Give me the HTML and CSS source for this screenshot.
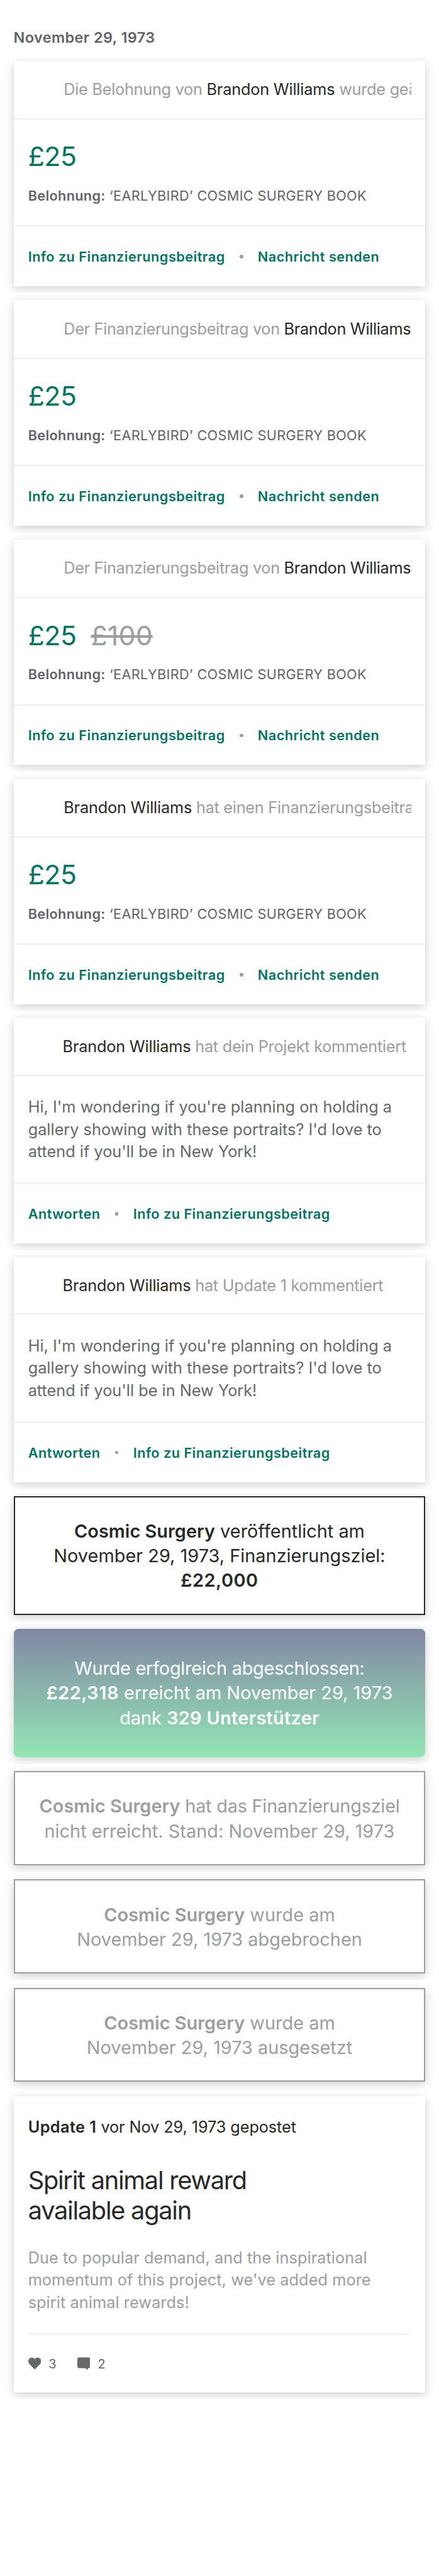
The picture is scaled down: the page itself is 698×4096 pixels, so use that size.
FILE: index.html
```html
<!DOCTYPE html>
<html lang="de">
<head>
<meta charset="utf-8">
<meta name="viewport" content="width=device-width, initial-scale=1">
<title>Projektaktivität</title>
<link rel="stylesheet" href="styles.css">
</head>
<body>
<main class="feed">
  <h1 class="date">November 29, 1973</h1>

  <section class="cell">
    <article class="card">
      <header class="head"><p class="head-text">Die Belohnung von <b>Brandon Williams</b> wurde geä</p></header>
      <div class="pledge">
        <p class="amount">£25</p>
        <p class="reward"><b>Belohnung:</b> ‘EARLYBIRD’ COSMIC SURGERY BOOK</p>
      </div>
      <footer class="actions"><a>Info zu Finanzierungsbeitrag</a><i class="dot"></i><a>Nachricht senden</a></footer>
    </article>
  </section>

  <section class="cell">
    <article class="card">
      <header class="head"><p class="head-text head-text-tight">Der Finanzierungsbeitrag von <b>Brandon Williams</b></p></header>
      <div class="pledge">
        <p class="amount">£25</p>
        <p class="reward"><b>Belohnung:</b> ‘EARLYBIRD’ COSMIC SURGERY BOOK</p>
      </div>
      <footer class="actions"><a>Info zu Finanzierungsbeitrag</a><i class="dot"></i><a>Nachricht senden</a></footer>
    </article>
  </section>

  <section class="cell">
    <article class="card">
      <header class="head"><p class="head-text head-text-tight">Der Finanzierungsbeitrag von <b>Brandon Williams</b></p></header>
      <div class="pledge">
        <p class="amount">£25<span class="old-amount">£100</span></p>
        <p class="reward"><b>Belohnung:</b> ‘EARLYBIRD’ COSMIC SURGERY BOOK</p>
      </div>
      <footer class="actions"><a>Info zu Finanzierungsbeitrag</a><i class="dot"></i><a>Nachricht senden</a></footer>
    </article>
  </section>

  <section class="cell">
    <article class="card">
      <header class="head"><p class="head-text"><b>Brandon Williams</b> hat einen Finanzierungsbeitra</p></header>
      <div class="pledge">
        <p class="amount">£25</p>
        <p class="reward"><b>Belohnung:</b> ‘EARLYBIRD’ COSMIC SURGERY BOOK</p>
      </div>
      <footer class="actions"><a>Info zu Finanzierungsbeitrag</a><i class="dot"></i><a>Nachricht senden</a></footer>
    </article>
  </section>

  <section class="cell">
    <article class="card card-comment">
      <header class="head"><p class="head-text"><b>Brandon Williams</b> hat dein Projekt kommentiert</p></header>
      <p class="comment">Hi, I'm wondering if you're planning on holding a<br>gallery showing with these portraits? I'd love to<br>attend if you'll be in New York!</p>
      <footer class="actions"><a>Antworten</a><i class="dot"></i><a>Info zu Finanzierungsbeitrag</a></footer>
    </article>
  </section>

  <section class="cell">
    <article class="card card-comment">
      <header class="head"><p class="head-text"><b>Brandon Williams</b> hat Update 1 kommentiert</p></header>
      <p class="comment">Hi, I'm wondering if you're planning on holding a<br>gallery showing with these portraits? I'd love to<br>attend if you'll be in New York!</p>
      <footer class="actions"><a>Antworten</a><i class="dot"></i><a>Info zu Finanzierungsbeitrag</a></footer>
    </article>
  </section>

  <section class="cell">
    <article class="card notice notice-launch"><b>Cosmic Surgery</b> veröffentlicht am<br>November 29, 1973, Finanzierungsziel:<br><b class="money">£22,000</b></article>
  </section>

  <section class="cell">
    <article class="card notice notice-success"><span class="tight">Wurde erfoglreich abgeschlossen:</span><br><b class="money">£22,318</b> erreicht am November 29, 1973<br>dank <b class="backers">329 Unterstützer</b></article>
  </section>

  <section class="cell">
    <article class="card notice notice-muted"><b>Cosmic Surgery</b><span class="tight"> hat das Finanzierungsziel</span><br>nicht erreicht. Stand: November 29, 1973</article>
  </section>

  <section class="cell">
    <article class="card notice notice-muted"><b>Cosmic Surgery</b> wurde am<br>November 29, 1973 abgebrochen</article>
  </section>

  <section class="cell">
    <article class="card notice notice-muted"><b>Cosmic Surgery</b> wurde am<br>November 29, 1973 ausgesetzt</article>
  </section>

  <section class="cell">
    <article class="card update">
      <p class="posted"><b>Update 1</b> vor Nov 29, 1973 gepostet</p>
      <h2 class="title">Spirit animal reward<br>available again</h2>
      <p class="excerpt">Due to popular demand, and the inspirational<br>momentum of this project, we've added more<br>spirit animal rewards!</p>
      <footer class="stats">
        <svg class="icon" viewBox="0 0 22 22"><path d="M11 21 1.800 11.700C-.6 9-.6 4.800 1.600 2.600 3.900.3 7.800.3 10 2.300L11 3.300 12 2.300C14.200.3 18.100.3 20.400 2.600 22.600 4.800 22.600 9 20.200 11.700Z"/></svg>
        <span class="count">3</span>
        <svg class="icon" viewBox="0 0 22 22"><path d="M3.500 .5h15A3.500 3.500 0 0 1 22 4v11.200a3.500 3.500 0 0 1-3.500 3.500H17.800V22L13 18.700H3.500A3.500 3.500 0 0 1 0 15.200V4A3.500 3.500 0 0 1 3.500 .5Z"/></svg>
        <span class="count">2</span>
      </footer>
    </article>
  </section>
</main>
</body>
</html>
```
FILE: styles.css
```css
/* 1rem = 10 layout units */
html {
  font-size: 9.308px;
}

*, *::before, *::after {
  box-sizing: border-box;
}

body, p, h1, h2 {
  margin: 0;
}

body {
  background: #fff;
  color: #282828;
  font-family: Inter, "Liberation Sans", sans-serif;
  font-size: 2.716rem;
}

b {
  font-weight: 600;
}

.feed {
  display: flow-root;
  height: 4096px;
  overflow: hidden;
}

.date {
  height: 3.2rem;
  margin: 4.86rem 2.3rem 1.14rem;
  color: #626369;
  font-size: 2.522rem;
  font-weight: 600;
  line-height: 3.2rem;
  letter-spacing: .0177em;
}

/* Each cell clips the shadow of its card */
.cell {
  padding: 1.2rem 2.4rem;
  overflow: hidden;
}

.card {
  height: 38.5rem;
  background: #fff;
  box-shadow: 0 .4rem 1.6rem rgba(0, 0, 0, .2);
  white-space: nowrap;
}

.card-comment {
  height: 38.4rem;
}

.head {
  display: flex;
  align-items: center;
  height: 10rem;
  padding: .1rem 2.3rem 0 8.48rem;
  border-bottom: 2px solid #edeef3;
}

.head-text {
  flex: 1;
  overflow: hidden;
  color: #9b9e9e;
  line-height: 4rem;
  letter-spacing: -.0103em;
}

.head-text b {
  color: #282828;
  font-weight: 400;
  letter-spacing: -.0075em;
}

.head-text-tight,
.head-text-tight b {
  letter-spacing: -.0125em;
}

.card-comment .head {
  height: 9.8rem;
  padding-left: 8.3rem;
}

.pledge {
  height: 18.3rem;
  padding: 3.6rem 2.4rem 0;
  border-bottom: 2px solid #edeef3;
}

.amount {
  color: #037362;
  font-size: 4.6rem;
  line-height: 5.56rem;
  letter-spacing: -.01em;
}

.old-amount {
  margin-left: 2.45rem;
  color: #9b9e9e;
  letter-spacing: .005em;
  text-decoration: line-through;
  text-decoration-thickness: .4rem;
}

.reward {
  margin-top: 2.45rem;
  color: #626369;
  font-size: 2.328rem;
  line-height: 3rem;
  letter-spacing: .0165em;
}

.comment {
  height: 18.4rem;
  padding: 3.5rem 2.4rem 0;
  border-bottom: 2px solid #edeef3;
  color: #656969;
  line-height: 3.8rem;
  letter-spacing: .0005em;
}

.actions {
  display: flex;
  align-items: center;
  gap: 2.5rem;
  height: 10.2rem;
  padding: .1rem 2.4rem 0;
  color: #037362;
  font-size: 2.328rem;
  font-weight: 600;
  letter-spacing: .0225em;
}

.dot {
  width: .6rem;
  height: .6rem;
  border-radius: 50%;
  background: #9b9e9e;
}

.notice {
  height: 16.1rem;
  padding-top: 3.67rem;
  border: 2px solid;
  font-size: 3.104rem;
  line-height: 4.2rem;
  letter-spacing: .0005em;
  text-align: center;
}

.notice-launch {
  height: 20.3rem;
  border-color: #282828;
}

.notice-success {
  height: 21.9rem;
  padding-top: 4.64rem;
  border: 0;
  border-radius: .8rem;
  background: linear-gradient(#8287a3, #93e6b5);
  color: #fff;
}

.notice-muted {
  border-color: #9b9e9e;
  color: #9b9e9e;
}

.tight {
  letter-spacing: -.008em;
}

.money {
  letter-spacing: .018em;
}

.backers {
  letter-spacing: .0108em;
}

.update {
  height: 50.6rem;
  padding: 3.44rem 2.4rem 0;
}

.posted {
  line-height: 3.8rem;
  letter-spacing: -.0033em;
}

.posted b {
  letter-spacing: .017em;
}

.title {
  margin-top: 4.76rem;
  font-size: 4.268rem;
  font-weight: 400;
  line-height: 5.1rem;
  letter-spacing: -.0315em;
}

.excerpt {
  margin-top: 3.59rem;
  color: #9b9e9e;
  line-height: 3.8rem;
  letter-spacing: .003em;
}

.stats {
  display: flex;
  align-items: center;
  height: 10.2rem;
  margin-top: 3.35rem;
  border-top: 2px solid #efefef;
  color: #626369;
  font-size: 2.13rem;
}

.icon {
  width: 2.2rem;
  height: 2.2rem;
  fill: #656969;
}

.count {
  width: 4.9rem;
  margin-left: 1.3rem;
}
```
